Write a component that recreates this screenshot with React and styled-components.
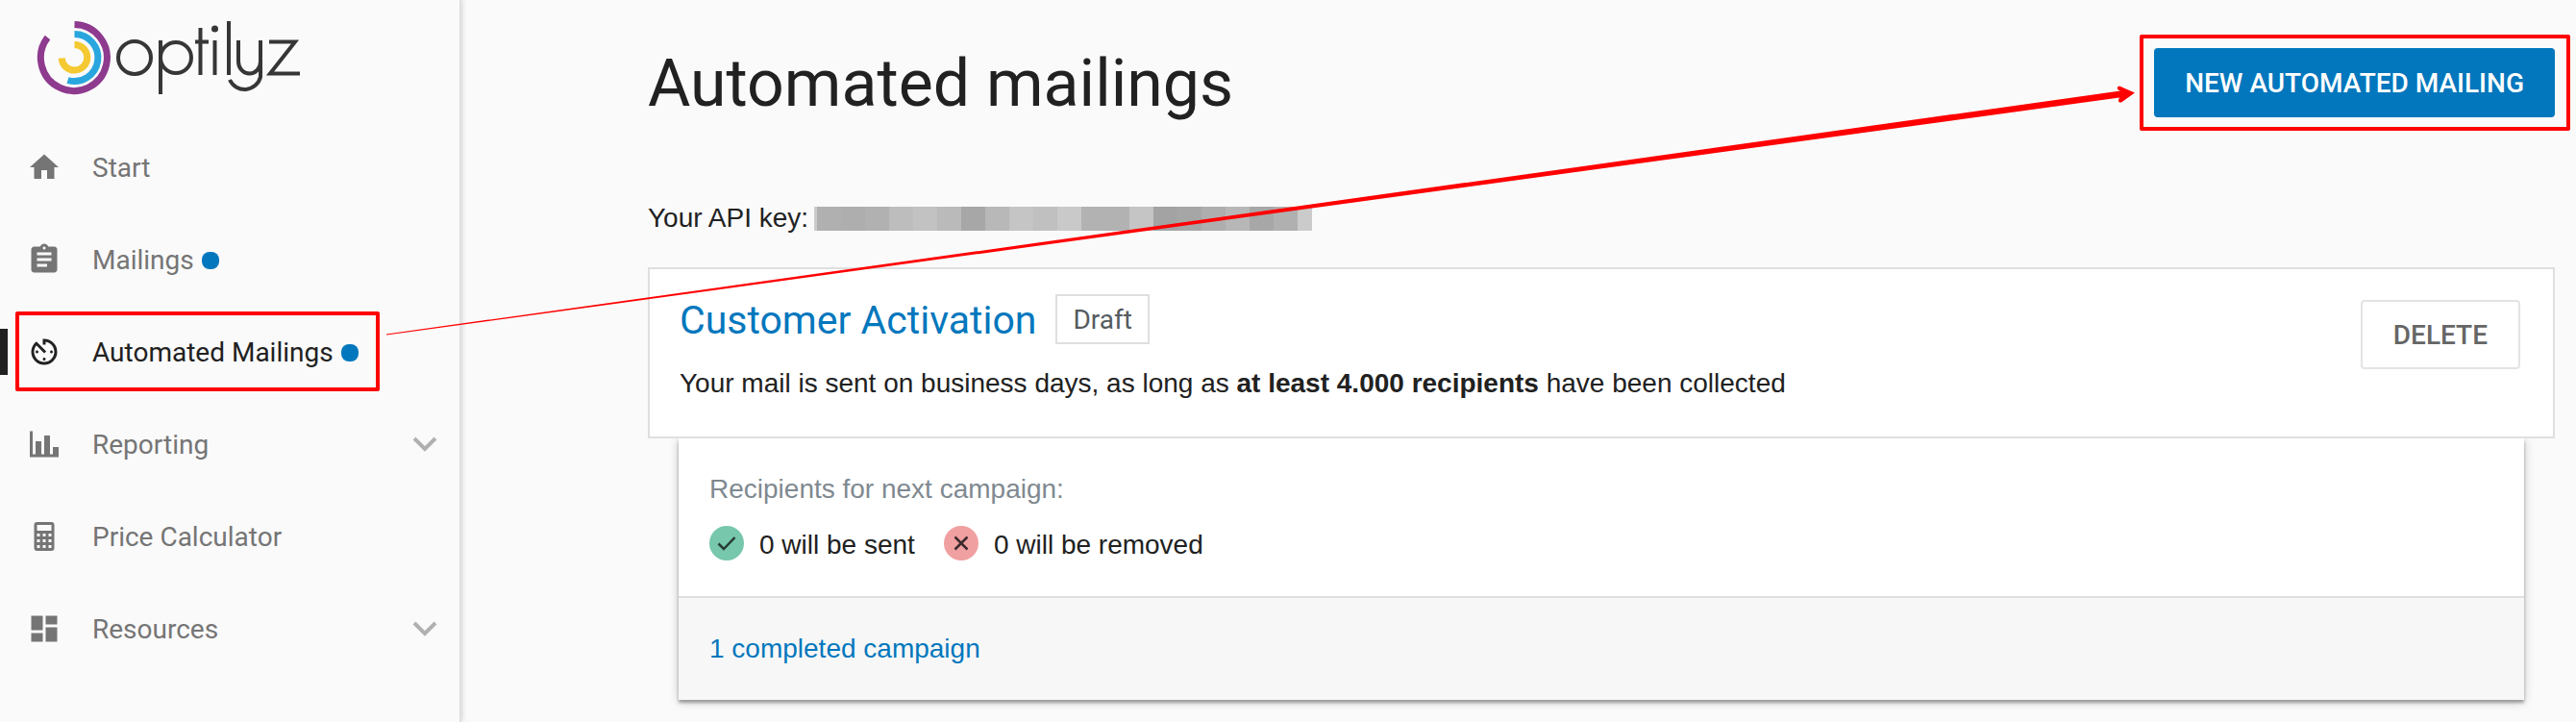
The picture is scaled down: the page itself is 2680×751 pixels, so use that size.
import React from "react";
import styled, { createGlobalStyle } from "styled-components";
import {
  MdHome,
  MdAssignment,
  MdAvTimer,
  MdDashboard,
} from "react-icons/md";

const GlobalStyle = createGlobalStyle`
  * {
    box-sizing: border-box;
  }

  body {
    margin: 0;
    background: #fafafa;
    color: #212121;
    font-family: "Liberation Sans", Arial, sans-serif;
    font-size: 28px;
    line-height: 40px;
  }
`;

const Page = styled.div`
  position: relative;
  display: flex;
  min-height: 100vh;
`;

const Sidebar = styled.aside`
  flex: none;
  width: 478px;
  padding-top: 20px;
  box-shadow: 2px 0 0 #e0e0e0, 2px 0 6px rgba(0, 0, 0, 0.2);
`;

const Logo = styled.a`
  display: block;
  height: 106px;
  padding-left: 38px;
`;

const NavItem = styled.a`
  position: relative;
  display: flex;
  align-items: center;
  height: 96px;
  padding: 0 18px 0 28px;
  color: ${(props) => (props.$active ? "#212121" : "#757575")};
  font-family: Roboto, sans-serif;
  text-decoration: none;

  & > svg:first-child {
    width: 36px;
    height: 36px;
    margin-right: 32px;
  }

  &::before {
    content: "";
    display: ${(props) => (props.$active ? "block" : "none")};
    position: absolute;
    left: 0;
    width: 8px;
    height: 48px;
    background: #212121;
  }
`;

const NavLabel = styled.span`
  display: flex;
  align-items: center;
  padding-top: 2px;
`;

const Dot = styled.span`
  width: 18px;
  height: 18px;
  margin-left: 8px;
  border-radius: 8px;
  background: #0277bd;
`;

const Chevron = styled.svg`
  width: 36px;
  height: 36px;
  margin-left: auto;
`;

const Content = styled.main`
  flex: 1;
  padding: 50px 22px 0 196px;
`;

const Header = styled.header`
  display: flex;
  justify-content: space-between;
  align-items: flex-start;
`;

const Title = styled.h1`
  margin: 0;
  font-family: Roboto, sans-serif;
  font-size: 68px;
  font-weight: 400;
  line-height: 74px;
`;

const Button = styled.button`
  height: 72px;
  padding: 0 32px;
  border: ${(props) => (props.$primary ? "none" : "2px solid #e4e4e4")};
  border-radius: 4px;
  background: ${(props) => (props.$primary ? "#0277bd" : "#fff")};
  color: ${(props) => (props.$primary ? "#fff" : "#666")};
  font-family: Roboto, sans-serif;
  font-size: 28px;
  font-weight: 500;
  text-transform: uppercase;
`;

const ApiKey = styled.div`
  display: flex;
  align-items: center;
  gap: 6px;
  margin: 83px 0 31px;
`;

const Pixels = styled.span`
  display: flex;
  height: 25px;
`;

const Pixel = styled.span`
  width: ${(props) => props.$width || 25}px;
  background: ${(props) => props.$color};
`;

const Card = styled.section`
  display: flex;
  justify-content: space-between;
  align-items: flex-start;
  min-height: 178px;
  padding: 26px 34px 26px 31px;
  border: 2px solid #dfdfdf;
  background: #fff;
`;

const CardHead = styled.div`
  display: flex;
  align-items: center;
  gap: 20px;
`;

const CardTitle = styled.a`
  padding-top: 2px;
  color: #0277bd;
  font-family: Roboto, sans-serif;
  font-size: 41px;
  line-height: 50px;
  text-decoration: none;
`;

const Tag = styled.span`
  padding: 5px 16px 3px;
  border: 2px solid #dfdfdf;
  color: #555b60;
  font-family: Roboto, sans-serif;
`;

const Description = styled.p`
  margin: 21px 0 0;
`;

const CardAction = styled.div`
  padding-top: 6px;
`;

const Panel = styled.section`
  margin: 0 32px;
  background: #fff;
  box-shadow: 0 3px 3px rgba(0, 0, 0, 0.3), 0 2px 10px rgba(0, 0, 0, 0.2);
  clip-path: inset(0 -20px -20px -20px);
`;

const Recipients = styled.div`
  padding: 33px 32px;
`;

const Label = styled.div`
  color: #808990;
`;

const Counts = styled.div`
  display: flex;
  gap: 30px;
  margin-top: 18px;
`;

const Count = styled.div`
  display: flex;
  align-items: flex-start;
  gap: 16px;

  svg {
    width: 36px;
    height: 36px;
  }
`;

const Completed = styled.div`
  padding: 33px 32px;
  border-top: 2px solid #dfdfdf;
  background: #f7f7f7;

  a {
    color: #0277bd;
    text-decoration: none;
  }
`;

// Red outlines sit over the controls they point out
const Outline = styled.span`
  position: absolute;
  inset: ${(props) => props.$inset};
  border: 4px solid #f00;
  border-radius: 2px;
  pointer-events: none;
`;

const Highlighted = styled.div`
  position: relative;
  display: flex;
`;

const Arrow = styled.svg`
  position: absolute;
  top: 80px;
  left: 402px;
  width: calc(100% - 858px);
  height: 272px;
  pointer-events: none;
`;

const pixels = [
  "#b0b0b0", "#aeaeae", "#b1b1b1", "#bdbdbd", "#c2c2c2", "#bababa", "#a7a7a7",
  "#b8b8b8", "#c5c5c5", "#c0c0c0", "#c9c9c9", "#b2b2b2", "#b2b2b2", "#c5c5c5",
  "#a3a3a3", "#a6a6a6", "#aeaeae", "#b7b7b7", "#a7a7a7", "#b0b0b0",
];

const ChartIcon = () => (
  <svg viewBox="0 0 24 24" fill="currentColor">
    <path d="M22 21H2V3h2v16h2v-9h4v9h2V6h4v13h2v-5h4v7z" />
  </svg>
);

const CalculatorIcon = () => (
  <svg viewBox="0 0 24 24" fill="currentColor" fillRule="evenodd">
    <path d="M7 2h10a2 2 0 0 1 2 2v16a2 2 0 0 1-2 2H7a2 2 0 0 1-2-2V4a2 2 0 0 1 2-2zm0 2v4h10V4H7zm0 6v2h2v-2H7zm4 0v2h2v-2h-2zm4 0v2h2v-2h-2zm-8 4v2h2v-2H7zm4 0v2h2v-2h-2zm4 0v2h2v-2h-2zm-8 4v2h2v-2H7zm4 0v2h2v-2h-2zm4 0v2h2v-2h-2z" />
  </svg>
);

const ChevronDown = () => (
  <Chevron viewBox="0 0 36 36" fill="none" stroke="#b0b0b0" strokeWidth="4">
    <path d="M7 12l11 11 11-11" />
  </Chevron>
);

const OptilyzLogo = () => (
  <svg width="276" height="80" viewBox="38 20 276 80" fill="none">
    <path d="M77.500 25.500A34.500 34.500 0 1 1 49.500 39" stroke="#8e3a8e" strokeWidth="7" />
    <path d="M77.500 35.500A24.500 24.500 0 1 1 70.500 83.500" stroke="#29a6de" strokeWidth="7" />
    <path d="M77.500 46.500A13.300 13.300 0 1 1 64.200 60.500" stroke="#f4c931" strokeWidth="7" />
    <g stroke="#363636" strokeWidth="4">
      <circle cx="140" cy="60" r="17" />
      <circle cx="183" cy="60" r="16" />
      <path d="M167 42v56M208.500 29v49M203 43.500h14M223.500 42v36M238 22v56" />
      <path d="M248 42v22a11.500 12.500 0 0 0 23 0V42M271 64v16a17 17 0 0 1-32 3" />
      <path d="M280 43.500h27l-26 33h31" />
    </g>
    <circle cx="223.500" cy="30" r="3.500" fill="#363636" />
  </svg>
);

const App = () => {
  return (
    <Page>
      <GlobalStyle />
      <Sidebar>
        <Logo href="#" aria-label="optilyz">
          <OptilyzLogo />
        </Logo>
        <nav>
          <NavItem href="#start">
            <MdHome />
            <NavLabel>Start</NavLabel>
          </NavItem>
          <NavItem href="#mailings">
            <MdAssignment />
            <NavLabel>
              Mailings
              <Dot />
            </NavLabel>
          </NavItem>
          <NavItem href="#automated" $active>
            <MdAvTimer />
            <NavLabel>
              Automated Mailings
              <Dot />
            </NavLabel>
            <Outline $inset="6px 83px 7px 16px" />
          </NavItem>
          <NavItem href="#reporting">
            <ChartIcon />
            <NavLabel>Reporting</NavLabel>
            <ChevronDown />
          </NavItem>
          <NavItem href="#calculator">
            <CalculatorIcon />
            <NavLabel>Price Calculator</NavLabel>
          </NavItem>
          <NavItem href="#resources">
            <MdDashboard />
            <NavLabel>Resources</NavLabel>
            <ChevronDown />
          </NavItem>
        </nav>
      </Sidebar>

      <Content>
        <Header>
          <Title>Automated mailings</Title>
          <Highlighted>
            <Button $primary>New automated mailing</Button>
            <Outline $inset="-14px -16px -14px -15px" />
          </Highlighted>
        </Header>

        <ApiKey>
          Your API key:
          <Pixels>
            <Pixel $width={3} $color="#cbcbcb" />
            {pixels.map((color, i) => (
              <Pixel key={i} $color={color} />
            ))}
            <Pixel $width={15} $color="#cbcbcb" />
          </Pixels>
        </ApiKey>

        <Card>
          <div>
            <CardHead>
              <CardTitle href="#campaign">Customer Activation</CardTitle>
              <Tag>Draft</Tag>
            </CardHead>
            <Description>
              Your mail is sent on business days, as long as{" "}
              <b>at least 4.000 recipients</b> have been collected
            </Description>
          </div>
          <CardAction>
            <Button>Delete</Button>
          </CardAction>
        </Card>

        <Panel>
          <Recipients>
            <Label>Recipients for next campaign:</Label>
            <Counts>
              <Count>
                <svg viewBox="0 0 36 36" fill="none" stroke="#263a35" strokeWidth="2.5">
                  <circle cx="18" cy="18" r="18" fill="#76c7ab" stroke="none" />
                  <path d="M9.500 18.500l5.500 5.500L26.500 12" />
                </svg>
                0 will be sent
              </Count>
              <Count>
                <svg viewBox="0 0 36 36" fill="none" stroke="#3a2a2c" strokeWidth="2.5">
                  <circle cx="18" cy="18" r="18" fill="#f1a0a1" stroke="none" />
                  <path d="M11.500 11.500l13 13M24.500 11.500l-13 13" />
                </svg>
                0 will be removed
              </Count>
            </Counts>
          </Recipients>
          <Completed>
            <a href="#completed">1 completed campaign</a>
          </Completed>
        </Panel>
      </Content>

      <Arrow viewBox="0 0 1822 272" preserveAspectRatio="none">
        <path
          d="M0 267.500L1804 14.500L1801.500 13.200Q1799.500 10.500 1803 9.500L1819 16.500L1805 26.500Q1801.500 27 1802 24L1803 21.500L0 268.500z"
          fill="#f00"
        />
      </Arrow>
    </Page>
  );
};

export default App;
